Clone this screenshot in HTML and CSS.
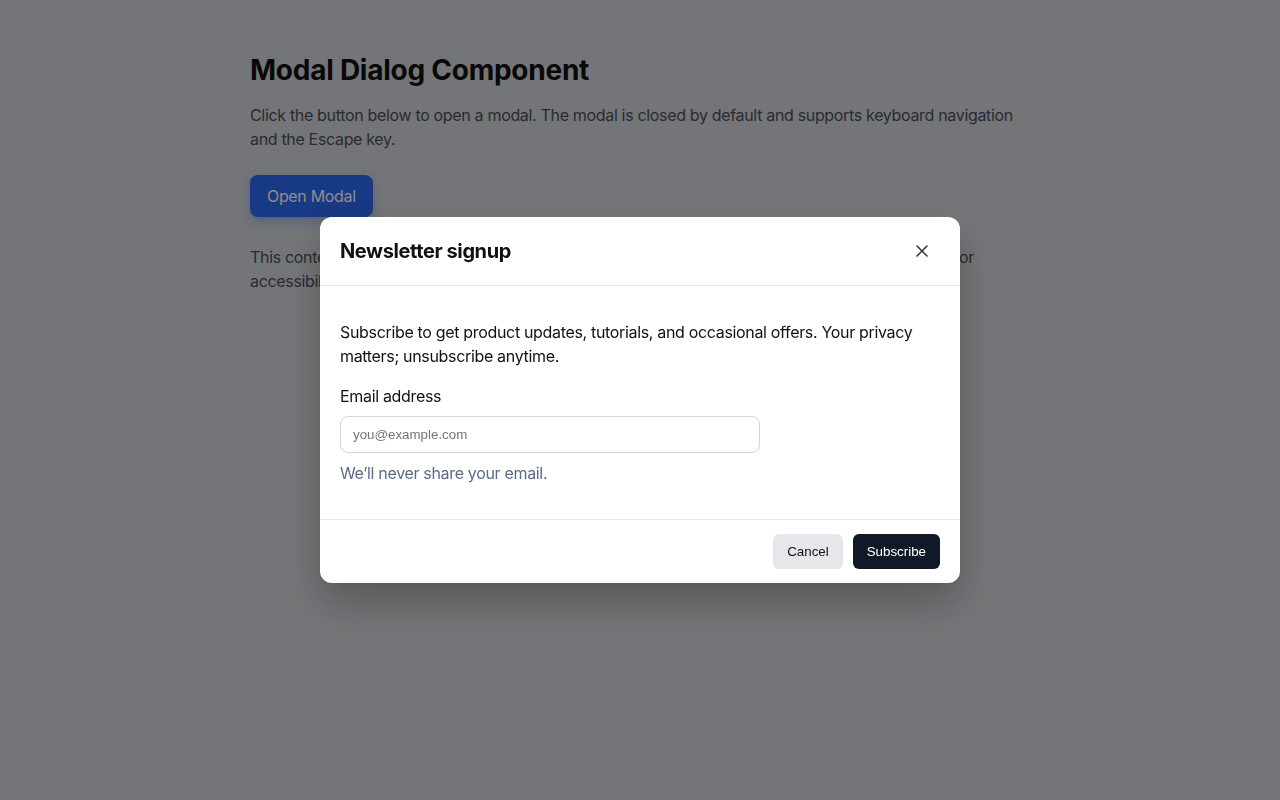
FILE: index.html
```html
<!DOCTYPE html>
<html lang="en">
<head>
<meta charset="utf-8">
<title>Modal Dialog Component</title>
<link rel="stylesheet" href="styles.css">
</head>
<body>
<main class="page">
  <h1 class="page-title">Modal Dialog Component</h1>
  <p class="page-text">Click the button below to open a modal. The modal is closed by default and supports keyboard navigation and the Escape key.</p>
  <button class="open-btn" type="button">Open Modal</button>
  <p class="page-text page-note">This content stays behind the overlay while the dialog is open, and focus is kept inside the modal for accessibility.</p>
</main>

<div class="overlay">
  <div class="modal" role="dialog" aria-modal="true" aria-labelledby="modal-title">
    <header class="modal-header">
      <h2 class="modal-title" id="modal-title">Newsletter signup</h2>
      <button class="close-btn" type="button" aria-label="Close">
        <svg width="12" height="12" viewBox="0 0 12 12" fill="none" stroke="currentColor" stroke-width="1.5" stroke-linecap="round"><path d="M1 1L11 11M11 1L1 11"/></svg>
      </button>
    </header>
    <div class="modal-body">
      <p class="modal-text">Subscribe to get product updates, tutorials, and occasional offers. Your privacy matters; unsubscribe anytime.</p>
      <label class="field-label" for="email">Email address</label>
      <input class="field-input" id="email" type="email" placeholder="you@example.com">
      <p class="field-help">We’ll never share your email.</p>
    </div>
    <footer class="modal-footer">
      <button class="btn btn-secondary" type="button">Cancel</button>
      <button class="btn btn-primary" type="button">Subscribe</button>
    </footer>
  </div>
</div>
</body>
</html>
```

FILE: styles.css
```css
* { box-sizing: border-box; }

html, body {
  margin: 0;
  height: 100%;
}

body {
  background: #d4d6db;
  font-family: Inter, "Noto Sans", "Liberation Sans", sans-serif;
  color: #111;
}

.page {
  width: 780px;
  margin: 0 auto;
  padding-top: 53px;
}

.page-title {
  margin: 0 0 16px;
  font-size: 28px;
  line-height: 34px;
  font-weight: 700;
  letter-spacing: -0.25px;
  color: #111;
}

.page-text {
  margin: 0 0 24px;
  font-size: 16px;
  line-height: 24px;
  letter-spacing: -0.33px;
  color: #4c4f57;
}

.page-note {
  margin-top: 28px;
}

.open-btn {
  display: block;
  height: 42px;
  padding: 0 17px;
  border: 0;
  border-radius: 8px;
  background: #2d68f0;
  color: #fff;
  font-family: inherit;
  font-size: 16px;
  letter-spacing: -0.33px;
  box-shadow: 0 4px 12px rgba(37, 99, 235, 0.35);
}

.overlay {
  position: fixed;
  inset: 0;
  background: rgba(0, 0, 0, 0.45);
  display: flex;
  align-items: center;
  justify-content: center;
}

.modal {
  width: 640px;
  background: #fff;
  border-radius: 12px;
  box-shadow: 0 20px 40px rgba(0, 0, 0, 0.25);
  overflow: hidden;
}

.modal-header {
  display: flex;
  align-items: center;
  justify-content: space-between;
  height: 69px;
  padding: 0 20px;
  border-bottom: 1px solid #e5e7eb;
}

.modal-title {
  margin: 0;
  font-size: 20px;
  line-height: 28px;
  font-weight: 700;
  color: #111;
  letter-spacing: -0.4px;
}

.close-btn {
  display: flex;
  align-items: center;
  justify-content: center;
  width: 32px;
  height: 32px;
  margin-right: 2px;
  padding: 0;
  border: 0;
  background: transparent;
  color: #333;
  border-radius: 6px;
}

.modal-body {
  padding: 34px 20px 34px;
}

.modal-text {
  margin: 0 0 16px;
  font-size: 16px;
  line-height: 24px;
  letter-spacing: -0.33px;
  color: #111;
}

.field-label {
  display: block;
  margin-bottom: 8px;
  font-size: 16px;
  line-height: 24px;
  letter-spacing: -0.33px;
  color: #111;
}

.field-input {
  display: block;
  width: 420px;
  height: 37px;
  padding: 0 12px;
  border: 1px solid #cbd5e1;
  border-radius: 8px;
  font-family: "Liberation Sans", Arial, sans-serif;
  font-size: 13.33px;
  color: #111;
}

.field-input::placeholder {
  color: #757575;
}

.field-help {
  margin: 8px 0 0;
  font-size: 16px;
  line-height: 24px;
  letter-spacing: -0.33px;
  color: #5b6b88;
}

.modal-footer {
  display: flex;
  justify-content: flex-end;
  gap: 10px;
  padding: 14px 20px;
  border-top: 1px solid #e5e7eb;
}

.btn {
  height: 35px;
  padding: 0 14px;
  border: 0;
  border-radius: 6px;
  font-family: "Liberation Sans", Arial, sans-serif;
  font-size: 13.33px;
}

.btn-secondary {
  background: #e5e7eb;
  color: #111;
}

.btn-primary {
  background: #111827;
  color: #fff;
}
```
